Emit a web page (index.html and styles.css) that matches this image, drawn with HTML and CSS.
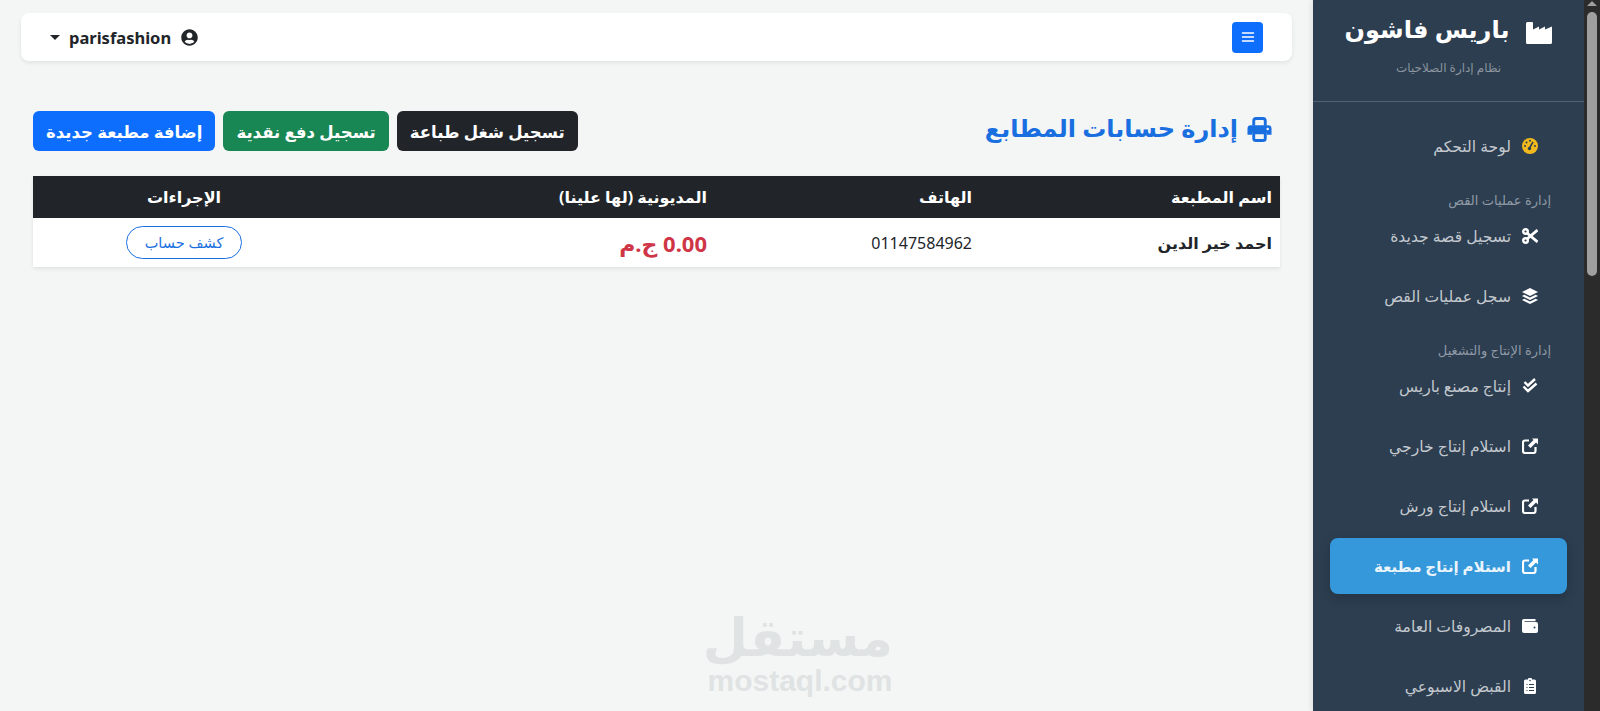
FILE: index.html
```html
<!DOCTYPE html>
<html lang="ar" dir="rtl">
<head>
<meta charset="utf-8">
<title>إدارة حسابات المطابع</title>
<link rel="stylesheet" href="styles.css">
</head>
<body>
<aside class="sidebar">
  <div class="scrollbar"><span class="sb-arrow"></span><span class="sb-thumb"></span></div>
  <div class="panel">
    <div class="brand">
      <h1 class="brand-title">
        <svg class="brand-icon" viewBox="0 0 26 22"><path d="M0 1.500Q0 0 1.500 0H6Q7 0 7 1V7.500L13 4.500V7.500L19 4.500V7.500L26 4.500V20.500Q26 22 24.500 22H1.500Q0 22 0 20.500Z"/></svg>
        <span>باريس فاشون</span>
      </h1>
      <p class="brand-sub">نظام إدارة الصلاحيات</p>
    </div>
    <nav class="nav">
      <a class="nav-item"><svg class="ico" viewBox="0 0 16 16"><circle cx="8" cy="8" r="8" fill="#f1b91d"/><path d="M7.500 10L11 4" stroke="#2c3e50" stroke-width="1.500" fill="none"/><circle cx="7.500" cy="10.500" r="1.700" fill="#2c3e50"/><circle cx="3" cy="8" r="1" fill="#2c3e50"/><circle cx="4.500" cy="4.500" r="1" fill="#2c3e50"/><circle cx="8" cy="2.800" r="1" fill="#2c3e50"/><circle cx="13" cy="8" r="1" fill="#2c3e50"/></svg><span>لوحة التحكم</span></a>
      <div class="nav-heading">إدارة عمليات القص</div>
      <a class="nav-item"><svg class="ico" viewBox="0 0 16 16"><g fill="none" stroke="#fff" stroke-width="2.400"><circle cx="3.500" cy="3.500" r="2.300"/><circle cx="3.500" cy="12.500" r="2.300"/></g><path d="M5 5L15.500 14M5 11L15.500 2" stroke="#fff" stroke-width="2.800"/></svg><span>تسجيل قصة جديدة</span></a>
      <a class="nav-item"><svg class="ico" viewBox="0 0 16 16"><path d="M8 0L16 4 8 8 0 4Z"/><path d="M2.300 6.700L8 9.500 13.700 6.700 16 8 8 12 0 8Z"/><path d="M2.300 10.700L8 13.500 13.700 10.700 16 12 8 16 0 12Z"/></svg><span>سجل عمليات القص</span></a>
      <div class="nav-heading">إدارة الإنتاج والتشغيل</div>
      <a class="nav-item"><svg class="ico" viewBox="0 0 16 16"><path d="M2.500 4L6 7.500 13 1M1.500 8.500L6 13 14.500 5.500" fill="none" stroke="#fff" stroke-width="2.400"/></svg><span>إنتاج مصنع باريس</span></a>
      <a class="nav-item"><svg class="ico" viewBox="0 0 16 16"><use href="#ext"/></svg><span>استلام إنتاج خارجي</span></a>
      <a class="nav-item"><svg class="ico" viewBox="0 0 16 16"><use href="#ext"/></svg><span>استلام إنتاج ورش</span></a>
      <a class="nav-item active"><svg class="ico" viewBox="0 0 16 16"><use href="#ext"/></svg><span>استلام إنتاج مطبعة</span></a>
      <a class="nav-item"><svg class="ico" viewBox="0 0 16 16"><path d="M2 1H13.500V3.300H2.500V4H14Q16 4 16 6V13Q16 15 14 15H2Q0 15 0 13V3Q0 1 2 1Z"/><circle cx="12.500" cy="9.500" r="1" fill="#2c3e50"/></svg><span>المصروفات العامة</span></a>
      <a class="nav-item"><svg class="ico" viewBox="0 0 16 16"><path d="M6 1.500A2 2 0 0 1 10 1.500H12.500Q14 1.500 14 3V14.500Q14 16 12.500 16H3.500Q2 16 2 14.500V3Q2 1.500 3.500 1.500Z"/><path d="M7 6.500H12M7 9.500H12M7 12.500H12M4.500 6.500H5.500M4.500 9.500H5.500M4.500 12.500H5.500" stroke="#2c3e50" stroke-width="1"/><circle cx="8" cy="2.500" r=".8" fill="#2c3e50"/></svg><span>القبض الاسبوعي</span></a>
    </nav>
  </div>
</aside>

<main class="main">
  <header class="topbar">
    <button class="menu-btn" type="button" aria-label="القائمة"><svg viewBox="0 0 16 16"><path d="M2.500 4H13.500M2.500 8H13.500M2.500 12H13.500" stroke="#fff" stroke-width="1.600" stroke-linecap="round"/></svg></button>
    <div class="user">
      <svg class="user-icon" viewBox="0 0 496 512"><path d="M248 8C111 8 0 119 0 256s111 248 248 248 248-111 248-248S385 8 248 8zm0 96c48.600 0 88 39.400 88 88s-39.400 88-88 88-88-39.400-88-88 39.400-88 88-88zm0 344c-58.700 0-111.300-26.600-146.500-68.200 18.800-35.400 55.600-59.800 98.500-59.800 2.400 0 4.800.4 7.100 1.100 13 4.200 26.600 6.900 40.900 6.900 14.300 0 28-2.700 40.900-6.900 2.300-.7 4.700-1.100 7.100-1.100 42.900 0 79.700 24.400 98.500 59.800C359.300 421.400 306.700 448 248 448z"/></svg>
      <span class="user-name">parisfashion</span>
      <span class="caret"></span>
    </div>
  </header>

  <section class="page-head">
    <h2 class="page-title">
      <svg class="title-icon" viewBox="0 0 26 26"><path d="M7 9V4Q7 1.500 9.500 1.500H16.500Q19 1.500 19 4V9" fill="none" stroke="#1a6fe0" stroke-width="3"/><path d="M4 8.500H22Q25.500 8.500 25.500 12V18.500H20.500V16H5.500V18.500H.5V12Q.5 8.500 4 8.500Z" fill="#1a6fe0"/><path d="M7 16.500H19V22Q19 24.500 16.500 24.500H9.500Q7 24.500 7 22Z" fill="none" stroke="#1a6fe0" stroke-width="3"/><circle cx="21.500" cy="12.500" r="1.300" fill="#f4f6f6"/></svg>
      <span>إدارة حسابات المطابع</span>
    </h2>
    <div class="actions">
      <a class="btn btn-dark">تسجيل شغل طباعة</a>
      <a class="btn btn-green">تسجيل دفع نقدية</a>
      <a class="btn btn-blue">إضافة مطبعة جديدة</a>
    </div>
  </section>

  <table class="table">
    <colgroup><col class="c-name"><col class="c-phone"><col class="c-debt"><col class="c-act"></colgroup>
    <thead>
      <tr><th>اسم المطبعة</th><th>الهاتف</th><th>المديونية (لها علينا)</th><th class="center">الإجراءات</th></tr>
    </thead>
    <tbody>
      <tr>
        <td class="name">احمد خير الدين</td>
        <td>01147584962</td>
        <td class="debt">0.00 ج.م</td>
        <td class="center"><a class="btn-outline">كشف حساب</a></td>
      </tr>
    </tbody>
  </table>
</main>

<div class="watermark" dir="ltr">
  <div class="wm-ar" dir="rtl">مستقل</div>
  <div class="wm-en">mostaql.com</div>
</div>

<svg class="defs" width="0" height="0"><defs><g id="ext"><path d="M7 2.500H3Q1 2.500 1 4.500V13Q1 15 3 15H11.500Q13.500 15 13.500 13V9" fill="none" stroke="#fff" stroke-width="2.200"/><path d="M10 .5H16V6.500L14 4.500 8.500 10 6 7.500 11.500 2Z" fill="#fff"/></g></defs></svg>
</body>
</html>
```

FILE: styles.css
```css
* { box-sizing: border-box; }
html, body { height: 100%; }
body {
  margin: 0;
  display: flex;
  height: 711px;
  overflow: hidden;
  background: #f4f6f6;
  color: #212529;
  font-family: "Noto Sans", "DejaVu Sans", sans-serif;
  font-size: 16px;
}
.sidebar {
  flex: 0 0 287px;
  height: 711px;
  display: flex;
  background: #2c3e50;
  color: #fff;
  box-shadow: -2px 0 5px rgba(0,0,0,.08);
}
.scrollbar {
  flex: 0 0 16px;
  background: #2b2b2b;
  display: flex;
  flex-direction: column;
  align-items: center;
}
.sb-arrow {
  margin-top: 1px;
  width: 0;
  height: 0;
  border: 5px solid transparent;
  border-top: 0;
  border-bottom-color: #9f9f9f;
}
.sb-thumb {
  margin-top: 6px;
  width: 10px;
  height: 264px;
  background: #9f9f9f;
  border-radius: 5px;
}
.panel { flex: 1 1 auto; min-width: 0; overflow: hidden; }
.brand {
  height: 102px;
  border-bottom: 1px solid rgba(255,255,255,.18);
  text-align: center;
  padding-top: 11px;
}
.brand-title {
  margin: 0;
  display: flex;
  justify-content: center;
  align-items: center;
  gap: 17px;
  font-size: 24px;
  line-height: 36px;
  font-weight: 700;
}
.brand-icon { width: 26px; height: 22px; fill: #fff; margin-top: 8px; }
.brand-sub { margin: 13px 0 0; font-size: 12px; line-height: 16px; color: rgba(255,255,255,.45); }
.nav { padding: 16px 17px 0; display: flex; flex-direction: column; }
.nav-item {
  height: 56px;
  flex: none;
  margin-bottom: 4px;
  padding: 0 29px 0 0;
  display: flex;
  align-items: center;
  gap: 11px;
  border-radius: 8px;
  font-size: 15.600px;
  color: #c3c8ce;
}
.nav-item.active {
  background: #3498db;
  color: #e9f3fa;
  font-size: 15px;
  font-weight: 700;
  box-shadow: 0 4px 12px rgba(0,0,0,.18);
}
.ico { width: 16px; height: 16px; flex: none; fill: #fff; }
.nav-heading {
  margin: 14px 0 0;
  height: 16px;
  flex: none;
  padding-right: 16px;
  font-size: 13px;
  line-height: 16px;
  color: #8f99a5;
}
.main { flex: 1 1 auto; min-width: 0; padding: 13px 21px 0 21px; }
.topbar {
  height: 48px;
  background: #fff;
  border-radius: 8px;
  box-shadow: 0 2px 4px rgba(0,0,0,.08);
  display: flex;
  justify-content: space-between;
  align-items: center;
  padding: 0 29px 0 29px;
}
.menu-btn {
  width: 31px;
  height: 31px;
  padding: 0;
  display: flex;
  align-items: center;
  justify-content: center;
  background: #0d6efd;
  border: 0;
  border-radius: 4px;
}
.menu-btn svg { width: 16px; height: 16px; }
.user { display: flex; align-items: center; gap: 10px; font-weight: 700; font-size: 16.500px; }
.user-icon { width: 17px; height: 17px; fill: #212529; }
.caret { width: 0; height: 0; border: 5px solid transparent; border-top-color: #212529; border-bottom: 0; margin-right: -1px; }
.page-head {
  margin: 50px 12px 25px;
  height: 40px;
  display: flex;
  justify-content: space-between;
  align-items: center;
}
.page-title {
  margin: 0;
  padding: 0 8px 8px 0;
  display: flex;
  align-items: center;
  gap: 9px;
  color: #1a6fe0;
  font-size: 24px;
  font-weight: 700;
}
.title-icon { width: 25px; height: 25px; margin-top: 4px; }
.actions { display: flex; gap: 8px; }
.btn {
  height: 40px;
  padding: 0 13px;
  display: flex;
  align-items: center;
  border-radius: 6px;
  color: #fff;
  font-weight: 700;
  font-size: 16.500px;
}
.btn-dark { background: #212529; }
.btn-green { background: #198754; }
.btn-blue { background: #0d6efd; }
.table {
  width: 1247px;
  margin: 0 12px;
  border-collapse: collapse;
  table-layout: fixed;
  background: #fff;
  box-shadow: 0 2px 4px rgba(0,0,0,.08);
}
.c-name { width: 300px; }
.c-phone { width: 265px; }
.c-debt { width: 380px; }
.c-act { width: 302px; }
.table th {
  height: 42px;
  background: #212529;
  color: #fff;
  font-weight: 700;
  font-size: 16px;
  text-align: right;
  padding: 0 8px;
}
.table td { height: 49px; padding: 0 8px; font-size: 16px; }
.table .center { text-align: center; }
.name { font-weight: 700; }
.table .debt { color: #cf3546; font-weight: 700; font-size: 22px; }
.btn-outline {
  display: inline-block;
  vertical-align: middle;
  width: 116px;
  height: 33px;
  line-height: 30px;
  border: 1px solid #1a6fe0;
  border-radius: 17px;
  color: #1a6fe0;
  font-size: 14.500px;
  text-align: center;
}
.watermark {
  position: absolute;
  left: 707px;
  top: 606px;
  width: 186px;
  text-align: center;
  color: #e0e3e3;
  font-weight: 700;
  pointer-events: none;
}
.wm-ar { font-size: 52px; line-height: 60px; }
.wm-en { font-family: "Liberation Sans", sans-serif; font-size: 30px; line-height: 30px; }
.defs { position: absolute; }
```
